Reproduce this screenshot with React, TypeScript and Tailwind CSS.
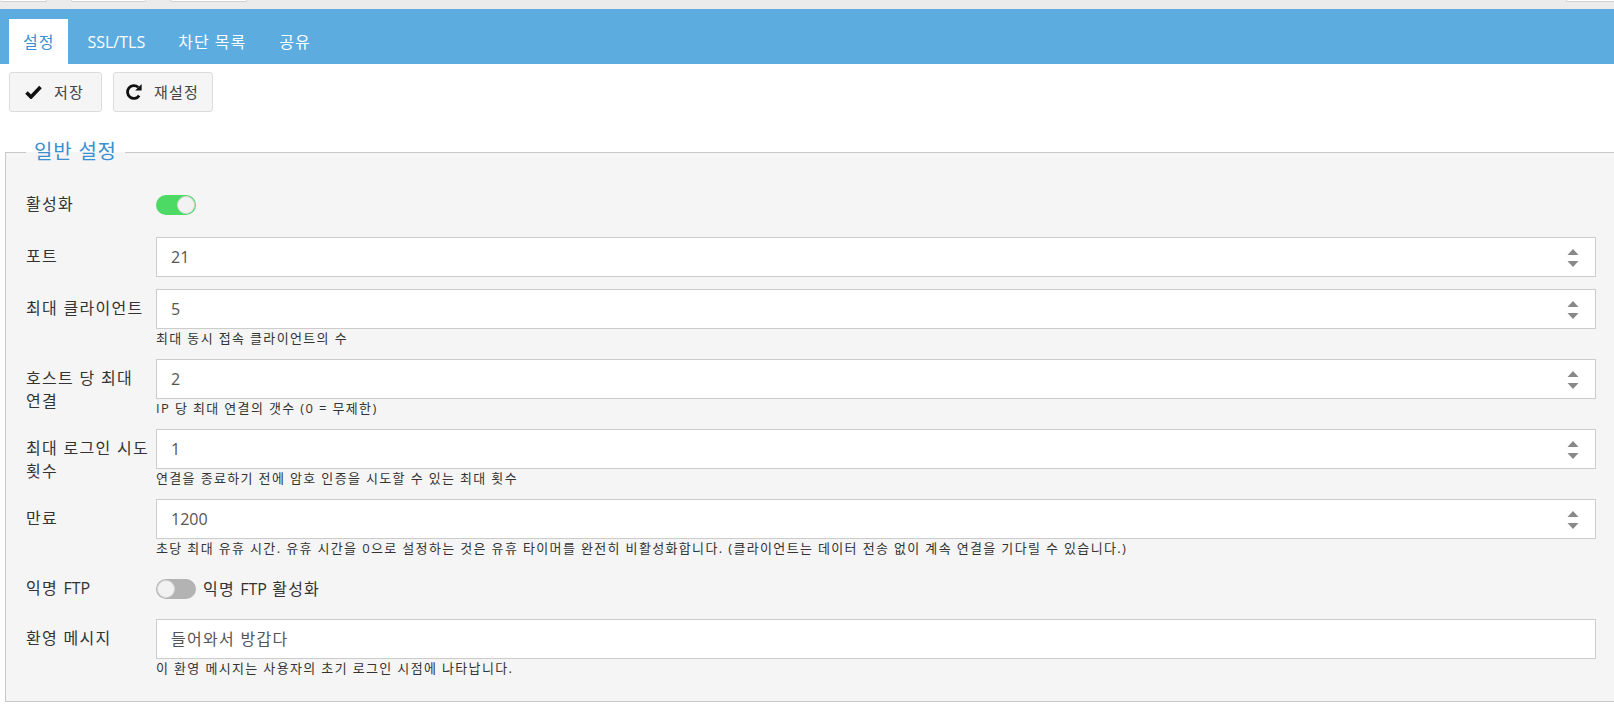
import { useState } from 'react'

const font = { fontFamily: '"Open Sans", "Noto Sans CJK KR", sans-serif' }

const Toggle = ({ on }: { on: boolean }) => (
	<div
		className={
			on
				? 'relative h-[20px] w-[40px] shrink-0 rounded-full bg-[#4cd964]'
				: 'relative h-[20px] w-[40px] shrink-0 rounded-full bg-[#b3b3b3]'
		}
	>
		<div
			className={
				on
					? 'absolute right-[1px] top-[1px] h-[18px] w-[18px] rounded-full border border-[#d8d8d8] bg-[#f2f2f2]'
					: 'absolute left-[1px] top-[1px] h-[18px] w-[18px] rounded-full border border-[#d8d8d8] bg-[#f2f2f2]'
			}
		></div>
	</div>
)

const Spinner = () => (
	<svg width={12} height={20} viewBox="0 0 12 20" className="absolute right-[16px] top-[10px]">
		<polygon points="6,1 11.5,7 0.5,7" fill="#888" />
		<polygon points="0.5,13 11.5,13 6,19" fill="#888" />
	</svg>
)

const NumberField = ({ value }: { value: string }) => (
	<div className="relative flex h-[40px] items-center border border-[#cccccc] bg-white pl-[14px] text-[16px] text-[#555]">
		{value}
		<Spinner />
	</div>
)

const Row = ({
	label,
	help,
	children,
}: {
	label: React.ReactNode
	help?: string
	children: React.ReactNode
}) => (
	<div className="flex">
		<div className="w-[130px] shrink-0 pr-[4px] pt-[8px] text-[16px] leading-[23px] tracking-[1.3px] text-[#333]">
			{label}
		</div>
		<div className="flex-1">
			{children}
			{help && (
				<div className="h-[18px] text-[13px] leading-[18px] tracking-[1.35px] text-[#333]">
					{help}
				</div>
			)}
		</div>
	</div>
)

const tabs = [
	{ name: '설정', ko: true },
	{ name: 'SSL/TLS', ko: false },
	{ name: '차단 목록', ko: true },
	{ name: '공유', ko: true },
]

export default function App() {
	const [active] = useState(0)
	return (
		<div className="min-h-[715px] bg-white" style={font}>
			<div className="flex h-[9px] gap-[24px] bg-[#ebebeb]">
				<div className="h-[2px] w-[47px] rounded-b-[3px] border-b border-r border-[#d0d0d0] bg-white"></div>
				<div className="h-[2px] w-[75px] rounded-b-[3px] border border-t-0 border-[#d0d0d0] bg-white"></div>
				<div className="h-[2px] w-[77px] rounded-b-[3px] border border-t-0 border-[#d0d0d0] bg-white"></div>
				<div className="ml-auto h-[2px] w-[48px] rounded-bl-[3px] border-b border-l border-[#d0d0d0] bg-white"></div>
			</div>
			<div className="flex h-[55px] items-end gap-[5px] bg-[#5dacdf] pl-[9px]">
				{tabs.map((t, i) => (
					<div
						key={t.name}
						className={
							(i === active
								? 'flex h-[45px] items-center bg-white px-[14px] text-[16px] text-[#3a8fd0]'
								: 'flex h-[45px] items-center px-[14px] text-[16px] text-white') +
							(t.ko ? ' tracking-[1px]' : '')
						}
					>
						{t.name}
					</div>
				))}
			</div>
			<div className="flex gap-[11px] pl-[9px] pt-[8px]">
				<button className="flex h-[40px] w-[93px] items-center gap-[12px] rounded-[3px] border border-[#dcdcdc] bg-[#f5f5f5] pl-[15px] text-[15px] tracking-[1.2px] text-[#444]">
					<svg width={17} height={14} viewBox="0 0 17 14">
						<path d="M1.5 7.5 L6 12 L15.5 2" fill="none" stroke="#111" strokeWidth={3.6} strokeLinejoin="miter" />
					</svg>
					저장
				</button>
				<button className="flex h-[40px] w-[100px] items-center gap-[11px] rounded-[3px] border border-[#dcdcdc] bg-[#f5f5f5] pl-[11px] text-[15px] tracking-[1.2px] text-[#444]">
					<svg width={18} height={18} viewBox="0 0 18 18">
						<path d="M14.2 12.6 A6.4 6.4 0 1 1 13.2 4.2" fill="none" stroke="#111" strokeWidth={2.8} />
						<polygon points="10.2,7.4 16.6,7.4 16.6,1" fill="#111" />
					</svg>
					재설정
				</button>
			</div>
			<fieldset className="ml-[5px] mt-[26px] border border-r-0 border-[#c8c8c8] bg-[#f5f5f5] pb-[24px] pl-[20px] pr-[18px] pt-[19px]">
				<legend className="px-[8px] text-[20px] leading-[28px] tracking-[0.8px] text-[#3a8fd0]">
					일반 설정
				</legend>
				<div className="flex flex-col gap-[12px]">
					<Row label="활성화">
						<div className="flex h-[40px] items-center">
							<Toggle on />
						</div>
					</Row>
					<Row label="포트">
						<NumberField value="21" />
					</Row>
					<Row label="최대 클라이언트" help="최대 동시 접속 클라이언트의 수">
						<NumberField value="5" />
					</Row>
					<Row label="호스트 당 최대 연결" help="IP 당 최대 연결의 갯수 (0 = 무제한)">
						<NumberField value="2" />
					</Row>
					<Row
						label="최대 로그인 시도 횟수"
						help="연결을 종료하기 전에 암호 인증을 시도할 수 있는 최대 횟수"
					>
						<NumberField value="1" />
					</Row>
					<Row
						label="만료"
						help="초당 최대 유휴 시간. 유휴 시간을 0으로 설정하는 것은 유휴 타이머를 완전히 비활성화합니다. (클라이언트는 데이터 전송 없이 계속 연결을 기다릴 수 있습니다.)"
					>
						<NumberField value="1200" />
					</Row>
					<Row
						label={
							<>
								익명 <span className="tracking-normal">FTP</span>
							</>
						}
					>
						<div className="flex h-[38px] items-center gap-[7px] pt-[1px] text-[16px] tracking-[1.2px] text-[#333]">
							<Toggle on={false} />
							<span>
								익명 <span className="tracking-normal">FTP</span> 활성화
							</span>
						</div>
					</Row>
					<Row label="환영 메시지" help="이 환영 메시지는 사용자의 초기 로그인 시점에 나타납니다.">
						<div className="flex h-[40px] items-center border border-[#cccccc] bg-white pl-[14px] text-[16px] tracking-[1.3px] text-[#555]">
							들어와서 방갑다
						</div>
					</Row>
				</div>
			</fieldset>
		</div>
	)
}
